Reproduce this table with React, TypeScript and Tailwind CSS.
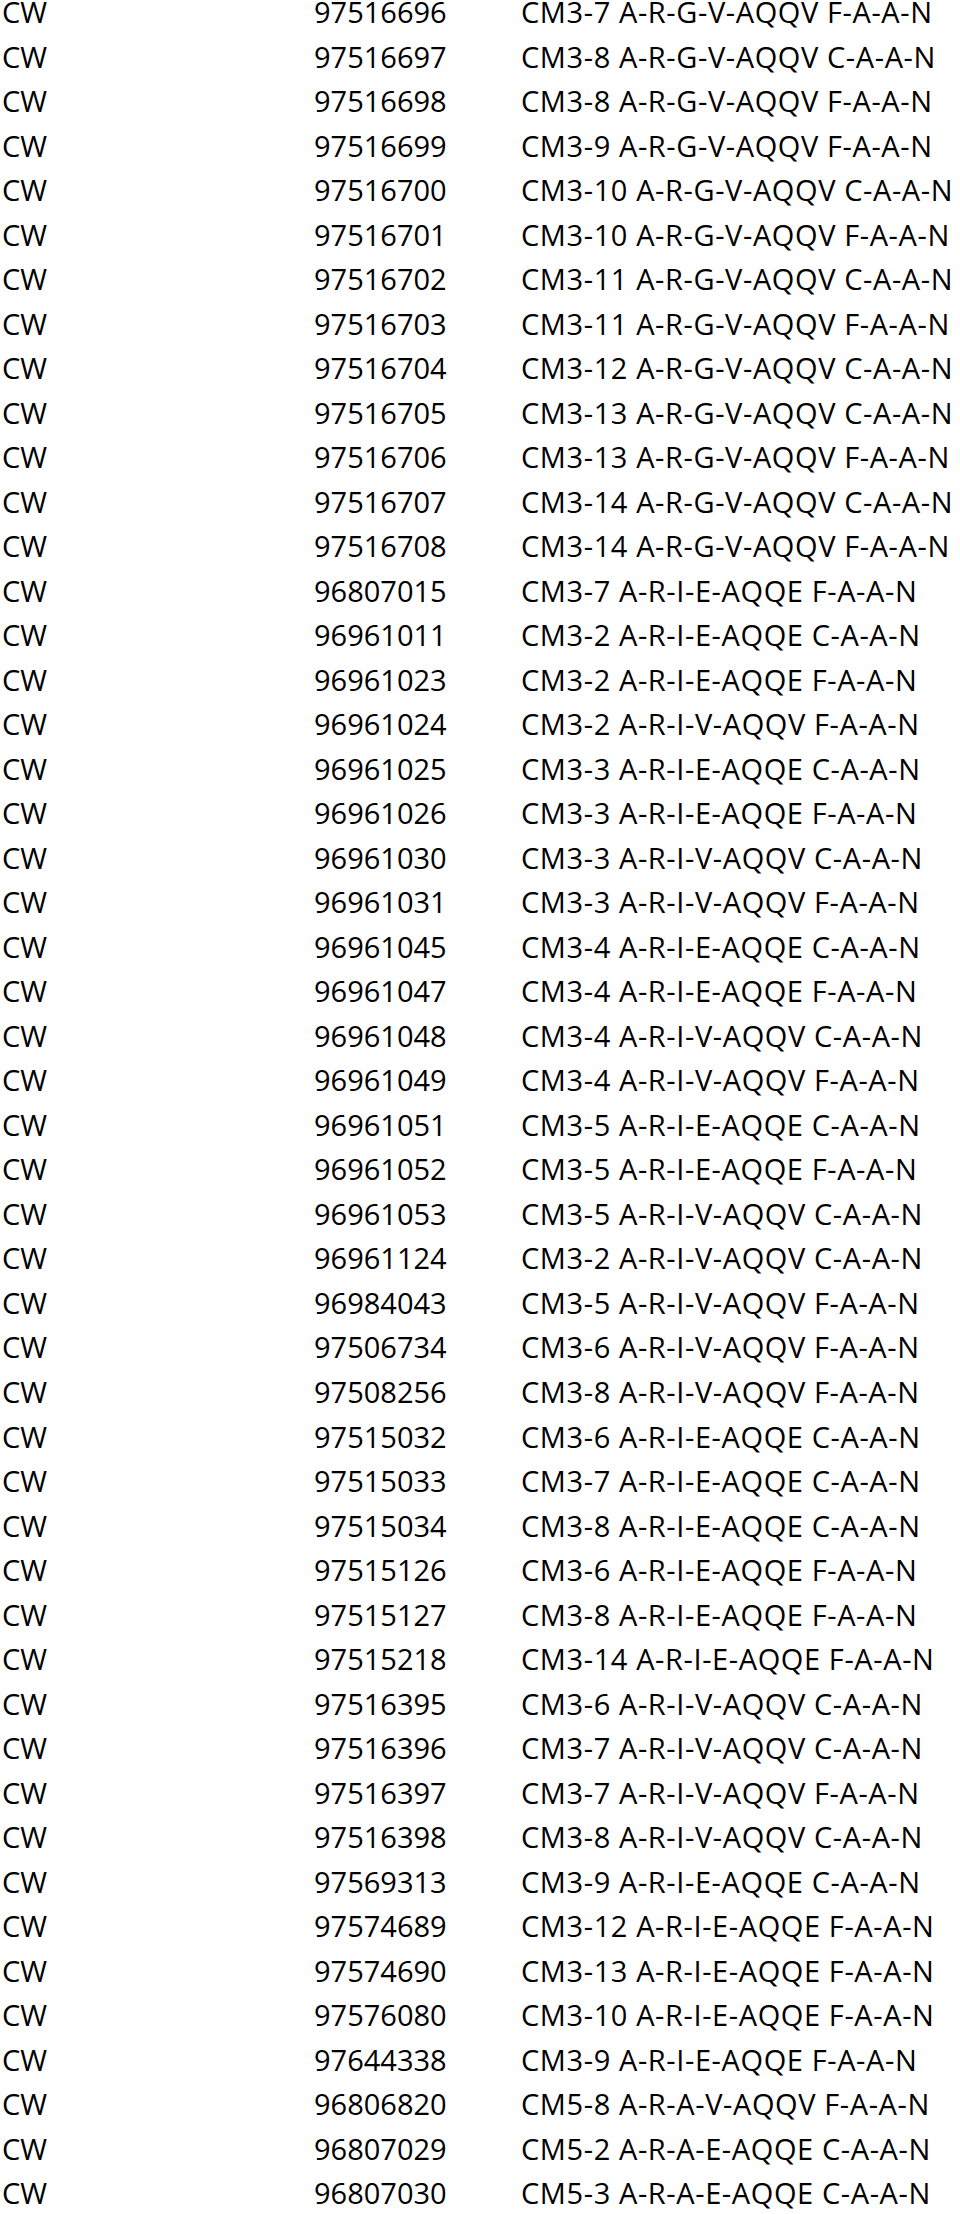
const rows: [string, string][] = [
  ["97516696", "CM3-7 A-R-G-V-AQQV F-A-A-N"],
  ["97516697", "CM3-8 A-R-G-V-AQQV C-A-A-N"],
  ["97516698", "CM3-8 A-R-G-V-AQQV F-A-A-N"],
  ["97516699", "CM3-9 A-R-G-V-AQQV F-A-A-N"],
  ["97516700", "CM3-10 A-R-G-V-AQQV C-A-A-N"],
  ["97516701", "CM3-10 A-R-G-V-AQQV F-A-A-N"],
  ["97516702", "CM3-11 A-R-G-V-AQQV C-A-A-N"],
  ["97516703", "CM3-11 A-R-G-V-AQQV F-A-A-N"],
  ["97516704", "CM3-12 A-R-G-V-AQQV C-A-A-N"],
  ["97516705", "CM3-13 A-R-G-V-AQQV C-A-A-N"],
  ["97516706", "CM3-13 A-R-G-V-AQQV F-A-A-N"],
  ["97516707", "CM3-14 A-R-G-V-AQQV C-A-A-N"],
  ["97516708", "CM3-14 A-R-G-V-AQQV F-A-A-N"],
  ["96807015", "CM3-7 A-R-I-E-AQQE F-A-A-N"],
  ["96961011", "CM3-2 A-R-I-E-AQQE C-A-A-N"],
  ["96961023", "CM3-2 A-R-I-E-AQQE F-A-A-N"],
  ["96961024", "CM3-2 A-R-I-V-AQQV F-A-A-N"],
  ["96961025", "CM3-3 A-R-I-E-AQQE C-A-A-N"],
  ["96961026", "CM3-3 A-R-I-E-AQQE F-A-A-N"],
  ["96961030", "CM3-3 A-R-I-V-AQQV C-A-A-N"],
  ["96961031", "CM3-3 A-R-I-V-AQQV F-A-A-N"],
  ["96961045", "CM3-4 A-R-I-E-AQQE C-A-A-N"],
  ["96961047", "CM3-4 A-R-I-E-AQQE F-A-A-N"],
  ["96961048", "CM3-4 A-R-I-V-AQQV C-A-A-N"],
  ["96961049", "CM3-4 A-R-I-V-AQQV F-A-A-N"],
  ["96961051", "CM3-5 A-R-I-E-AQQE C-A-A-N"],
  ["96961052", "CM3-5 A-R-I-E-AQQE F-A-A-N"],
  ["96961053", "CM3-5 A-R-I-V-AQQV C-A-A-N"],
  ["96961124", "CM3-2 A-R-I-V-AQQV C-A-A-N"],
  ["96984043", "CM3-5 A-R-I-V-AQQV F-A-A-N"],
  ["97506734", "CM3-6 A-R-I-V-AQQV F-A-A-N"],
  ["97508256", "CM3-8 A-R-I-V-AQQV F-A-A-N"],
  ["97515032", "CM3-6 A-R-I-E-AQQE C-A-A-N"],
  ["97515033", "CM3-7 A-R-I-E-AQQE C-A-A-N"],
  ["97515034", "CM3-8 A-R-I-E-AQQE C-A-A-N"],
  ["97515126", "CM3-6 A-R-I-E-AQQE F-A-A-N"],
  ["97515127", "CM3-8 A-R-I-E-AQQE F-A-A-N"],
  ["97515218", "CM3-14 A-R-I-E-AQQE F-A-A-N"],
  ["97516395", "CM3-6 A-R-I-V-AQQV C-A-A-N"],
  ["97516396", "CM3-7 A-R-I-V-AQQV C-A-A-N"],
  ["97516397", "CM3-7 A-R-I-V-AQQV F-A-A-N"],
  ["97516398", "CM3-8 A-R-I-V-AQQV C-A-A-N"],
  ["97569313", "CM3-9 A-R-I-E-AQQE C-A-A-N"],
  ["97574689", "CM3-12 A-R-I-E-AQQE F-A-A-N"],
  ["97574690", "CM3-13 A-R-I-E-AQQE F-A-A-N"],
  ["97576080", "CM3-10 A-R-I-E-AQQE F-A-A-N"],
  ["97644338", "CM3-9 A-R-I-E-AQQE F-A-A-N"],
  ["96806820", "CM5-8 A-R-A-V-AQQV F-A-A-N"],
  ["96807029", "CM5-2 A-R-A-E-AQQE C-A-A-N"],
  ["96807030", "CM5-3 A-R-A-E-AQQE C-A-A-N"],
];

export default function App() {
  return (
    <div className="w-[960px] h-[2214px] overflow-hidden bg-white text-black">
      <div className="pl-[2px] font-['Open_Sans',sans-serif] text-[29px] leading-[24px]">
        {rows.map(([num, desc]) => (
          <div key={num} className="grid h-[44.53px] grid-cols-[312px_207px_1fr] whitespace-nowrap">
            <span>CW</span>
            <span>{num}</span>
            <span className="tracking-[0.6px]">{desc}</span>
          </div>
        ))}
      </div>
    </div>
  );
}
